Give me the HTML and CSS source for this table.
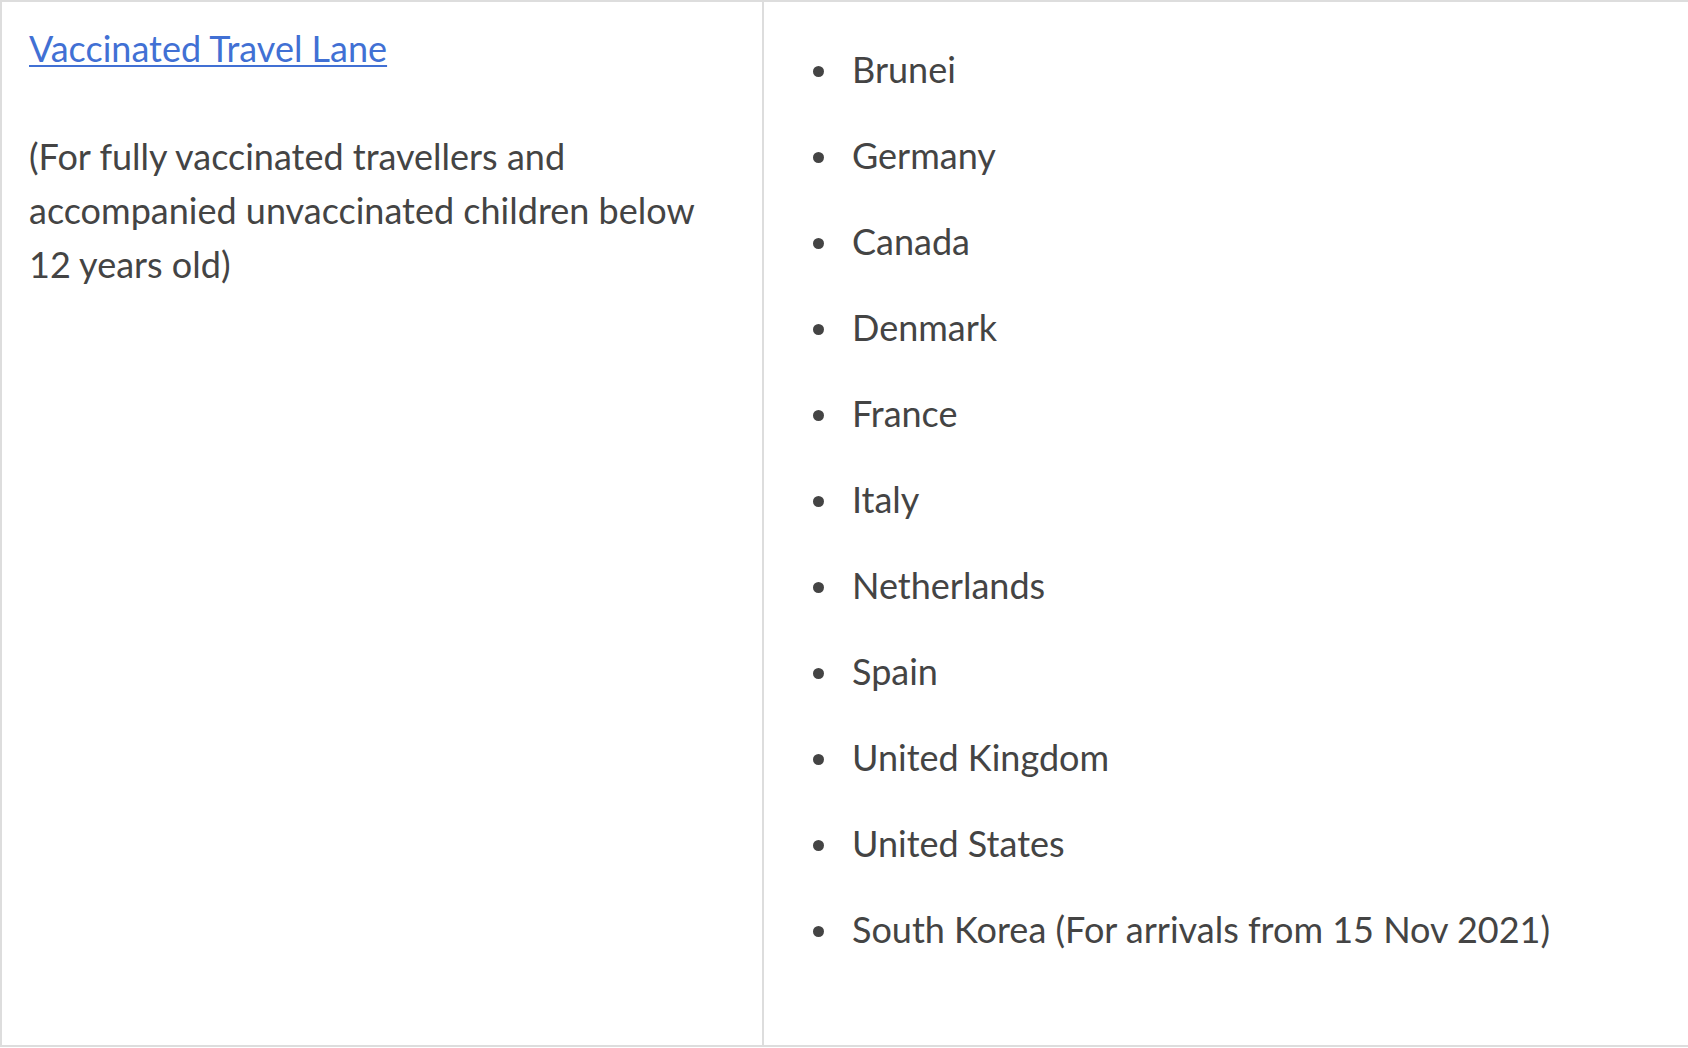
FILE: index.html
```html
<!DOCTYPE html>
<html lang="en">
<head>
<meta charset="utf-8">
<title>Vaccinated Travel Lane</title>
<link rel="stylesheet" href="styles.css">
</head>
<body>
<table class="lanes">
  <tr>
    <td class="lane">
      <p class="lane-title"><a href="#">Vaccinated Travel Lane</a></p>
      <p class="lane-note">(For fully vaccinated travellers and accompanied unvaccinated children below 12 years old)</p>
    </td>
    <td class="countries">
      <ul class="country-list">
        <li>Brunei</li>
        <li>Germany</li>
        <li>Canada</li>
        <li>Denmark</li>
        <li>France</li>
        <li>Italy</li>
        <li>Netherlands</li>
        <li>Spain</li>
        <li>United Kingdom</li>
        <li>United States</li>
        <li>South Korea (For arrivals from 15 Nov 2021)</li>
      </ul>
    </td>
  </tr>
</table>
</body>
</html>
```

FILE: styles.css
```css
html, body {
  margin: 0;
  padding: 0;
  background: #ffffff;
}

body {
  overflow: hidden;
  font-family: Lato, "Open Sans", sans-serif;
  color: #444444;
}

.lanes {
  border-collapse: separate;
  border-spacing: 0;
  width: 1760px;
  border-top: 2px solid #dddddd;
  border-left: 2px solid #dddddd;
  font-size: 36px;
  line-height: 54px;
}

.lanes td {
  box-sizing: border-box;
  vertical-align: top;
  padding: 17px 27px;
  border-right: 2px solid #dddddd;
  border-bottom: 2px solid #dddddd;
}

.lanes td.lane {
  width: 762px;
  padding-top: 19px;
}

.lane-title {
  margin: 0 0 54px;
}

.lane-title a {
  color: #4170d4;
  text-decoration: underline;
  text-decoration-thickness: 2px;
  text-underline-offset: 3px;
}

.lane-note {
  margin: 0;
}

.country-list {
  list-style: none;
  margin: 23px 0 72px;
  padding-left: 61px;
}

.country-list li {
  margin-bottom: 32px;
}

.country-list li::before {
  content: "";
  display: inline-block;
  width: 11px;
  height: 11px;
  border-radius: 50%;
  background: #444444;
  margin-left: -39px;
  margin-right: 28px;
  vertical-align: 6px;
}
```
